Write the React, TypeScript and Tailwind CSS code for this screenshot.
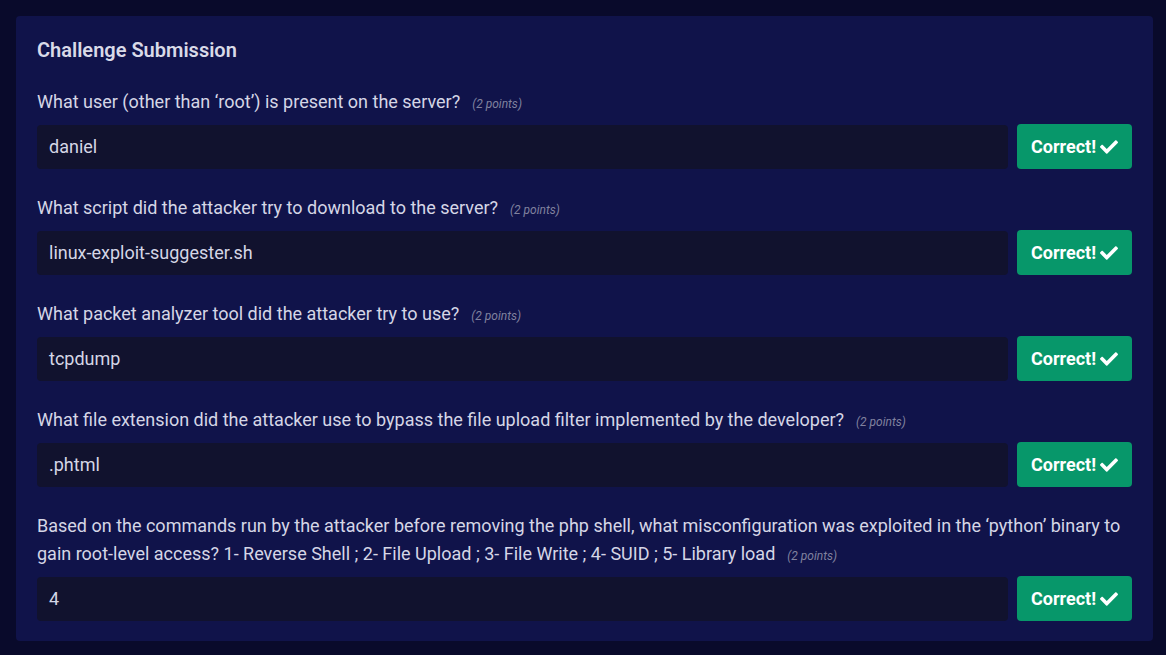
import React from 'react';
import { FaCheck } from 'react-icons/fa';

type Question = {
  text: string;
  answer: string;
};

const questions: Question[] = [
  { text: 'What user (other than \u2018root\u2019) is present on the server?', answer: 'daniel' },
  { text: 'What script did the attacker try to download to the server?', answer: 'linux-exploit-suggester.sh' },
  { text: 'What packet analyzer tool did the attacker try to use?', answer: 'tcpdump' },
  {
    text: 'What file extension did the attacker use to bypass the file upload filter implemented by the developer?',
    answer: '.phtml',
  },
  {
    text: 'Based on the commands run by the attacker before removing the php shell, what misconfiguration was exploited in the \u2018python\u2019 binary to gain root-level access? 1- Reverse Shell ; 2- File Upload ; 3- File Write ; 4- SUID ; 5- Library load',
    answer: '4',
  },
];

const QuestionRow: React.FC<{ q: Question }> = ({ q }) => (
  <div className="mb-[25px] last:mb-0">
    <p className="text-[18px] leading-[28px] text-[#d5d6e6]">
      {q.text}
      <span className="ml-[12px] text-[12px] italic leading-none text-[#80829f]">(2 points)</span>
    </p>
    <div className="mt-[8px] flex items-center gap-[9px]">
      <div className="flex h-[44px] flex-1 items-center rounded-[4px] bg-[#11122e] px-[12px] text-[18px] text-[#d5d6e6]">
        {q.answer}
      </div>
      <button className="flex h-[45px] w-[115px] items-center justify-center gap-[4px] rounded-[4px] bg-[#07976a] text-[18px] font-bold text-white">
        Correct!
        <FaCheck className="h-[18px] w-[18px]" />
      </button>
    </div>
  </div>
);

const App: React.FC = () => {
  return (
    <div className="min-h-screen bg-[#090a2b] p-[16px] font-['Roboto',sans-serif]">
      <div className="mr-[-3px] rounded-[4px] bg-[#10134a] px-[21px] pb-[20px] pt-[22px]">
        <h2 className="text-[20px] font-semibold leading-[24px] text-[#d9dae8]">Challenge Submission</h2>
        <div className="mt-[26px]">
          {questions.map((q, i) => (
            <QuestionRow q={q} key={i} />
          ))}
        </div>
      </div>
    </div>
  );
};

export default App;
